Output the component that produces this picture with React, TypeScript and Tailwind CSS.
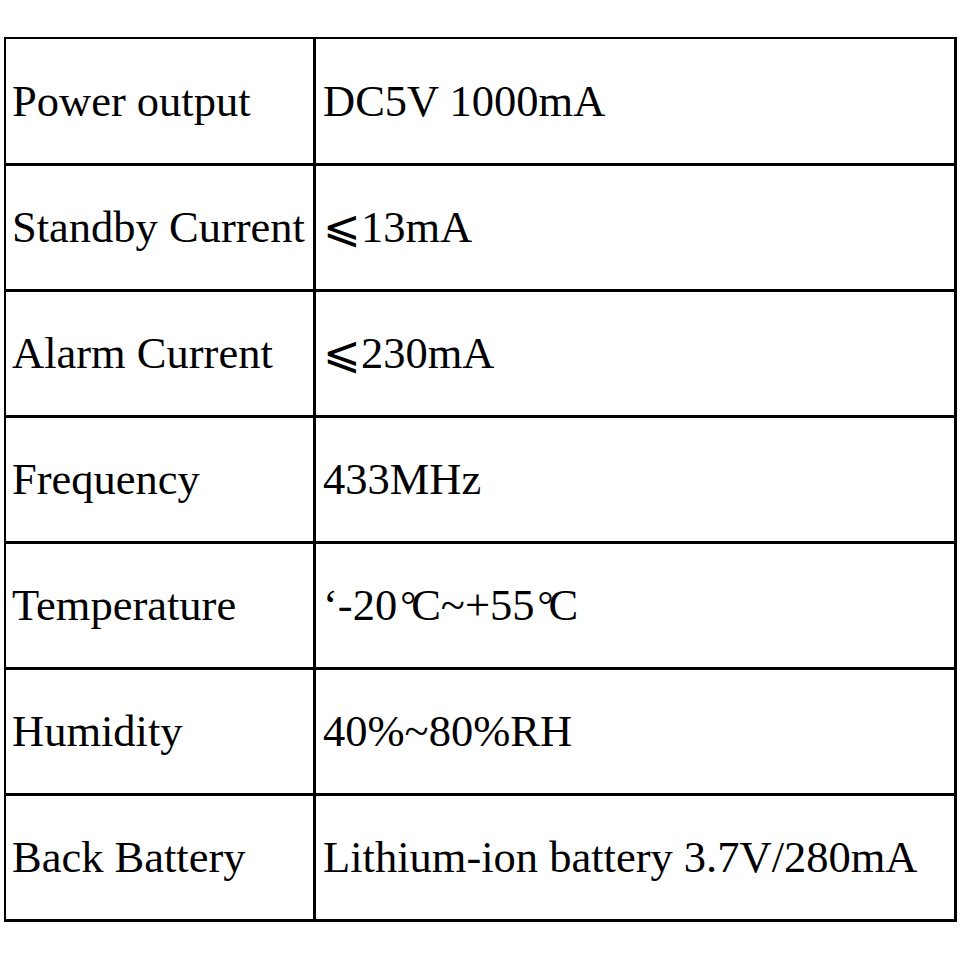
import React from "react";

const Deg = () => (
  <span className="inline-block ml-[3px]">
    <span className="tracking-[-5px] text-[40px] relative top-[-1px]">°</span>C
  </span>
);

const rows: [string, React.ReactNode][] = [
  ["Power output", "DC5V 1000mA"],
  ["Standby Current", "⩽13mA"],
  ["Alarm Current", "⩽230mA"],
  ["Frequency", "433MHz"],
  [
    "Temperature",
    <>
      ‘-20<Deg />~+55<Deg />
    </>,
  ],
  ["Humidity", "40%~80%RH"],
  ["Back Battery", "Lithium-ion battery 3.7V/280mA"],
];

export default function App() {
  return (
    <div className="w-[960px] h-[960px] bg-white pt-[37px] pl-[4px]">
      <div
        className="w-[953px] border-l-2 border-t-2 border-r-[3px] border-b-[3px] border-black flex flex-col text-black text-[44.5px]"
        style={{ fontFamily: '"Liberation Serif", "DejaVu Serif", "Noto Sans CJK SC", serif' }}
      >
        {rows.map(([k, v], i) => (
          <div
            key={k}
            className={`flex box-content ${i > 0 ? "h-[123px] border-t-[3px] border-black" : "h-[124px]"}`}
          >
            <div className="w-[310px] border-r-[3px] border-black flex items-center pl-[6px] whitespace-nowrap">
              {k}
            </div>
            <div className="flex-1 flex items-center pl-[7px] whitespace-nowrap">{v}</div>
          </div>
        ))}
      </div>
    </div>
  );
}
